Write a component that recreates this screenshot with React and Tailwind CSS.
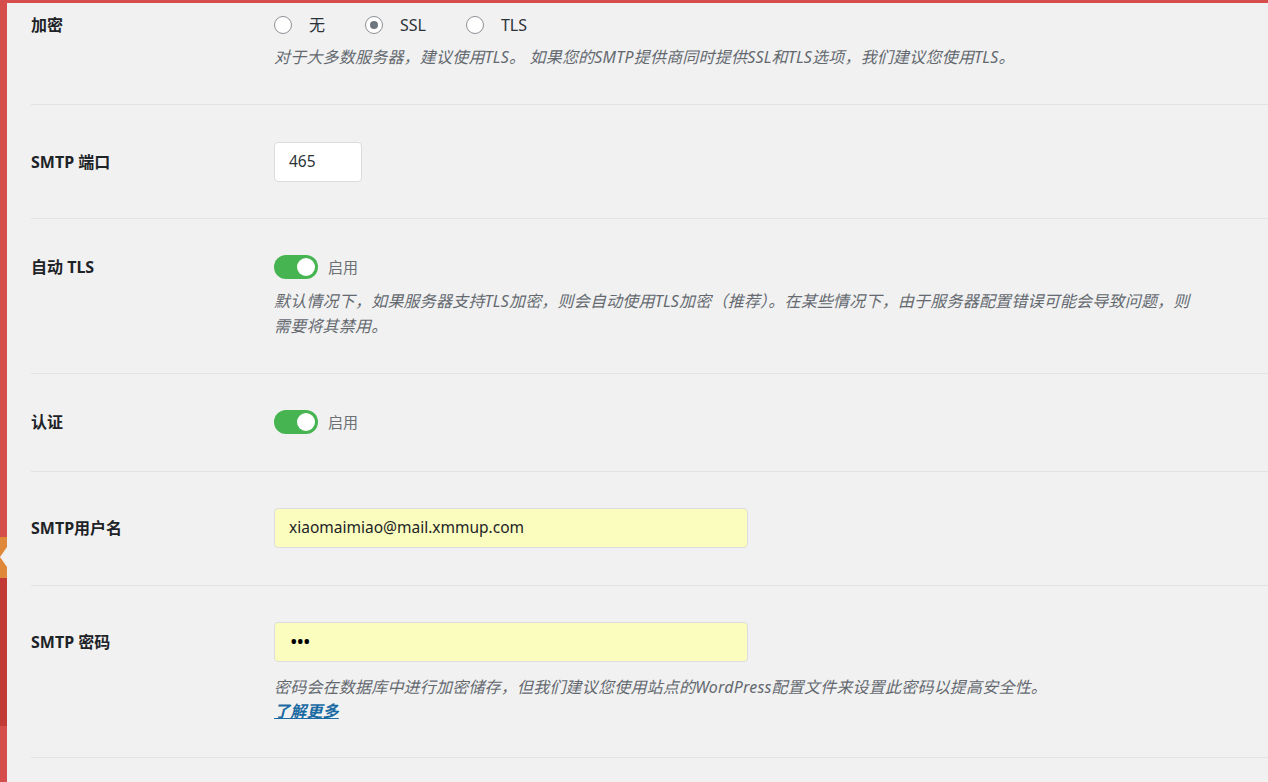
import React from 'react';

const font = { fontFamily: '"Noto Sans", "Noto Sans CJK SC", sans-serif' };

const Radio = ({ checked, label }) => (
  <label className="flex items-center gap-[17px]">
    <span className="w-[18px] h-[18px] rounded-full border border-[#8c8f94] bg-white flex items-center justify-center">
      {checked && <span className="w-[8px] h-[8px] rounded-full bg-[#6f7780]" />}
    </span>
    <span className="text-[16px] text-[#2c3338]">{label}</span>
  </label>
);

const Toggle = () => (
  <div className="flex items-center gap-[10px]">
    <span className="w-[44px] h-[24px] rounded-full bg-[#46b450] flex items-center justify-end pr-[3px]">
      <span className="w-[18px] h-[18px] rounded-full bg-white" />
    </span>
    <span className="text-[15px] text-[#6b7075]">启用</span>
  </div>
);

const Row = ({ label, labelH, className, children }) => (
  <div className={`flex border-b border-[#e2e2e2] ${className}`}>
    <div className={`w-[243px] shrink-0 flex items-center ${labelH}`}>
      <span className="text-[16px] font-bold text-[#1d2327]">{label}</span>
    </div>
    <div className="flex-1 min-w-0">{children}</div>
  </div>
);

const Desc = ({ children, className = '' }) => (
  <p className={`italic text-[16px] tracking-[0.2px] text-[#646970] max-w-[925px] ${className}`}>{children}</p>
);

export default function App() {
  return (
    <div className="flex w-full h-[782px] bg-[#f1f1f1] overflow-hidden" style={font}>
      <div className="w-[7px] shrink-0 flex flex-col">
        <div className="h-[537px] bg-[#d54e4b]" />
        <div className="relative h-[41px] bg-[#e0883a]">
          <span className="absolute right-0 top-[10px] w-0 h-0 border-y-[10px] border-y-transparent border-r-[7px] border-r-[#f1f1f1]" />
        </div>
        <div className="h-[148px] bg-[#c13a35]" />
        <div className="flex-1 bg-[#d54e4b]" />
      </div>

      <div className="flex-1 flex flex-col min-w-0">
        <div className="h-[3px] bg-[#d54e4b] shrink-0" />
        <div className="pl-[24px]">
          <Row label="加密" labelH="h-[20px]" className="pt-[12px] pb-[34px]">
            <div className="h-[20px] flex items-center gap-[40px]">
              <Radio label="无" />
              <Radio checked label="SSL" />
              <Radio label="TLS" />
            </div>
            <Desc className="mt-[10px] leading-[25px]">
              对于大多数服务器，建议使用TLS。 如果您的SMTP提供商同时提供SSL和TLS选项，我们建议您使用TLS。
            </Desc>
          </Row>

          <Row label="SMTP 端口" labelH="h-[40px]" className="pt-[37px] pb-[36px]">
            <div className="w-[88px] h-[40px] rounded-[4px] border border-[#dcdcde] bg-white flex items-center pl-[14px] text-[15.5px] text-[#2c3338]">
              465
            </div>
          </Row>

          <Row label="自动 TLS" labelH="h-[24px]" className="pt-[36px] pb-[34px]">
            <Toggle />
            <Desc className="mt-[10px] leading-[25px]">
              默认情况下，如果服务器支持TLS加密，则会自动使用TLS加密（推荐）。在某些情况下，由于服务器配置错误可能会导致问题，则需要将其禁用。
            </Desc>
          </Row>

          <Row label="认证" labelH="h-[24px]" className="pt-[36px] pb-[37px]">
            <Toggle />
          </Row>

          <Row label="SMTP用户名" labelH="h-[40px]" className="pt-[36px] pb-[37px]">
            <div className="w-[474px] h-[40px] rounded-[4px] border border-[#dcdcde] bg-[#fafdbe] flex items-center pl-[14px] text-[15.5px] text-[#1d2327]">
              xiaomaimiao@mail.xmmup.com
            </div>
          </Row>

          <Row label="SMTP 密码" labelH="h-[40px]" className="pt-[36px] pb-[34px]">
            <div className="w-[474px] h-[40px] rounded-[4px] border border-[#dcdcde] bg-[#fafdbe] flex items-center pl-[15px] text-[20px] leading-none tracking-[-1px] text-black">
              •••
            </div>
            <Desc className="mt-[13px] leading-[24px]">
              密码会在数据库中进行加密储存，但我们建议您使用站点的WordPress配置文件来设置此密码以提高安全性。
              <br />
              <a href="#" className="font-bold underline text-[#1a6aa3]">了解更多</a>
            </Desc>
          </Row>
        </div>
      </div>
    </div>
  );
}
